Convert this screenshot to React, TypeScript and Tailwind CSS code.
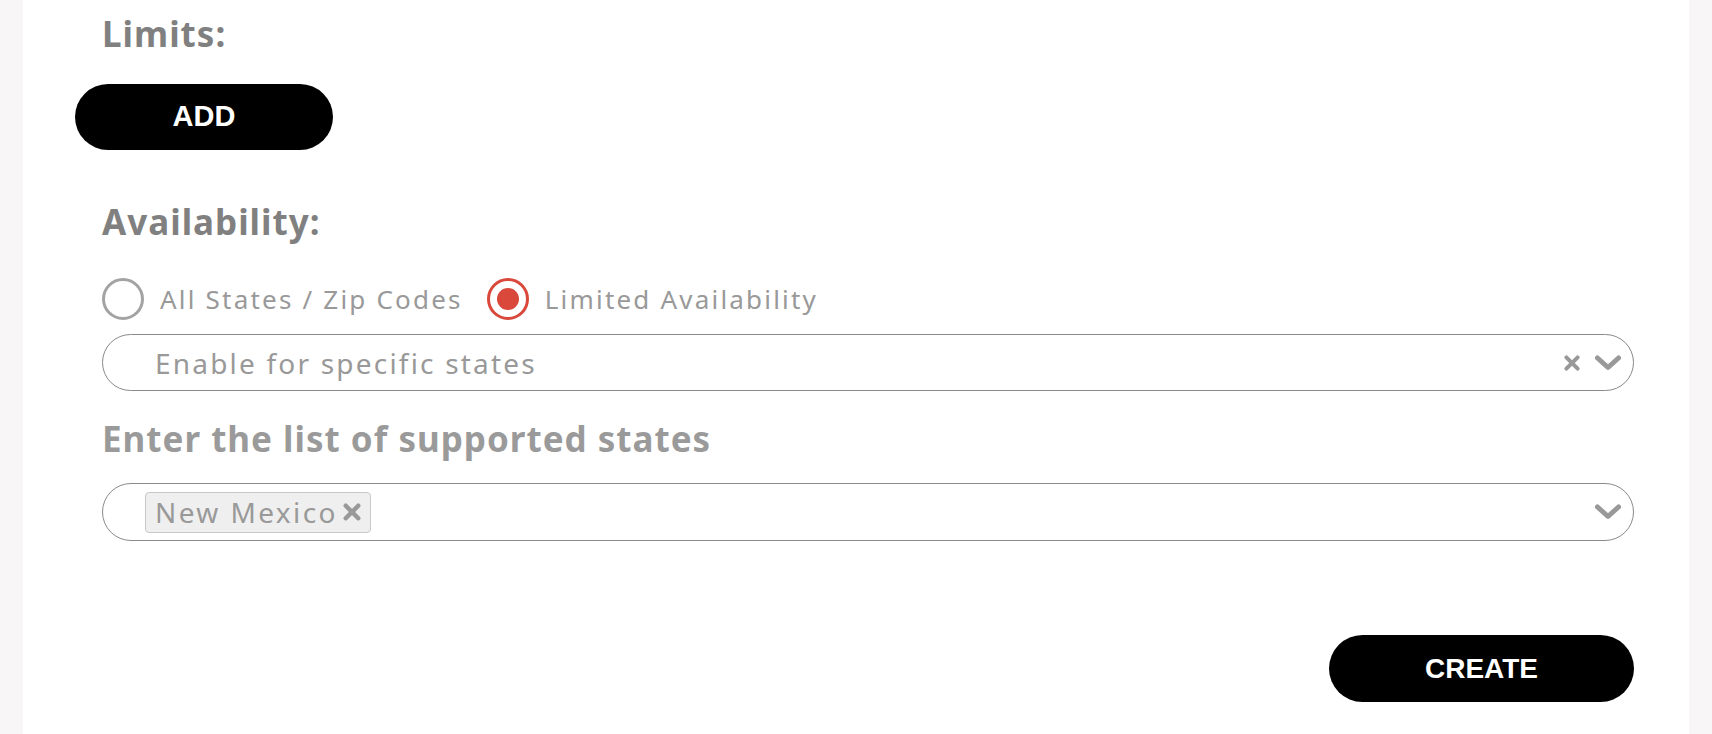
import { useState } from "react";

const font = { fontFamily: '"Noto Sans", "Open Sans", sans-serif' };
const btnFont = { fontFamily: '"Liberation Sans", Arial, sans-serif' };

function Chevron() {
  return (
    <svg viewBox="0 0 28 18" className="h-[18px] w-[28px]">
      <polyline
        points="3.5,4 14,13.5 24.5,4"
        fill="none"
        stroke="#999999"
        strokeWidth="5"
        strokeLinecap="round"
        strokeLinejoin="round"
      />
    </svg>
  );
}

function Cross({ size = 18 }: { size?: number }) {
  return (
    <svg viewBox="0 0 16 16" style={{ width: size, height: size }}>
      <path
        d="M3 3 L13 13 M13 3 L3 13"
        stroke="#999999"
        strokeWidth="3.6"
        strokeLinecap="round"
      />
    </svg>
  );
}

function Radio({ checked, label, onClick }: { checked: boolean; label: string; onClick: () => void }) {
  return (
    <button type="button" onClick={onClick} className="flex items-center gap-[16px]">
      <span
        className={
          checked
            ? "flex h-[42px] w-[42px] items-center justify-center rounded-full border-[3px] border-[#d9483b] bg-white"
            : "flex h-[42px] w-[42px] items-center justify-center rounded-full border-[3px] border-[#a3a3a3] bg-white"
        }
      >
        {checked && <span className="h-[22px] w-[22px] rounded-full bg-[#d9483b]" />}
      </span>
      <span className="text-[26px] leading-none tracking-[2.2px] text-[#999999]">{label}</span>
    </button>
  );
}

export default function App() {
  const [mode, setMode] = useState<"all" | "limited">("limited");

  return (
    <div className="flex h-[734px] w-full bg-[#f8f6f6]" style={font}>
      <div className="ml-[23px] flex w-[1666px] flex-col bg-white pl-[52px] pr-[55px]">
        <h2 className="pl-[27px] pt-[14px] text-[35px] font-bold leading-[40px] tracking-[1px] text-[#808080]">Limits:</h2>

        <button
          type="button"
          className="mt-[30px] flex h-[66px] w-[258px] items-center justify-center rounded-full bg-black text-[29px] font-bold text-white"
          style={btnFont}
        >
          ADD
        </button>

        <div className="flex flex-col pl-[27px]">
          <h2 className="mt-[52px] text-[35px] font-bold leading-[40px] tracking-[1px] text-[#808080]">Availability:</h2>

          <div className="mt-[36px] flex items-center gap-[24px]">
            <Radio checked={mode === "all"} label="All States / Zip Codes" onClick={() => setMode("all")} />
            <Radio checked={mode === "limited"} label="Limited Availability" onClick={() => setMode("limited")} />
          </div>

          <div className="mt-[14px] flex h-[57px] items-center rounded-full border border-[#8a8a8a] pl-[52px] pr-[11px]">
            <span className="flex-1 text-[28px] tracking-[2.2px] text-[#999999]">Enable for specific states</span>
            <div className="flex items-center gap-[13px]">
              <Cross />
              <Chevron />
            </div>
          </div>

          <h2 className="mt-[28px] text-[35px] font-bold leading-[40px] tracking-[1px] text-[#9a9a9a]">
            Enter the list of supported states
          </h2>

          <div className="mt-[24px] flex h-[58px] items-center rounded-full border border-[#8a8a8a] pl-[42px] pr-[11px]">
            <div className="flex flex-1 items-center">
              <span className="flex h-[41px] items-center gap-[4px] rounded-[4px] border border-[#c8c8c8] bg-[#efefef] pl-[9px] pr-[8px]">
                <span className="text-[28px] leading-none tracking-[2.4px] text-[#999999]">New Mexico</span>
                <Cross size={20} />
              </span>
            </div>
            <Chevron />
          </div>
        </div>

        <div className="mt-[94px] flex justify-end">
          <button
            type="button"
            className="flex h-[67px] w-[305px] items-center justify-center rounded-full bg-black text-[28px] font-bold text-white"
            style={btnFont}
          >
            CREATE
          </button>
        </div>
      </div>
    </div>
  );
}
